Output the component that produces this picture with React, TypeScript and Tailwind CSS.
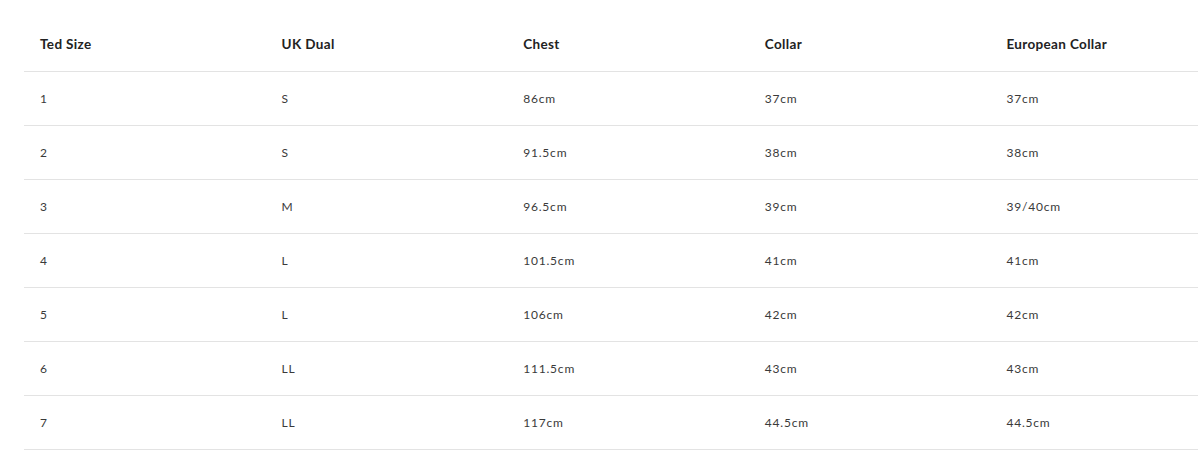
export default function App() {
  const header = ["Ted Size", "UK Dual", "Chest", "Collar", "European Collar"];
  const rows = [
    ["1", "S", "86cm", "37cm", "37cm"],
    ["2", "S", "91.5cm", "38cm", "38cm"],
    ["3", "M", "96.5cm", "39cm", "39/40cm"],
    ["4", "L", "101.5cm", "41cm", "41cm"],
    ["5", "L", "106cm", "42cm", "42cm"],
    ["6", "LL", "111.5cm", "43cm", "43cm"],
    ["7", "LL", "117cm", "44.5cm", "44.5cm"],
  ];
  return (
    <div className="w-[1198px] h-[458px] overflow-hidden bg-white pl-6 pt-[18px]" style={{ fontFamily: "Lato, 'Open Sans', sans-serif" }}>
      <div className="w-[1208px]">
        <div className="grid grid-cols-5 h-[54px] items-center border-b border-[#e3e3e3]">
          {header.map((h) => (
            <div key={h} className="pl-4 text-[13.5px] font-bold text-[#222] tracking-[0.35px]">{h}</div>
          ))}
        </div>
        {rows.map((r, i) => (
          <div key={i} className="grid grid-cols-5 h-[54px] items-center border-b border-[#e3e3e3]">
            {r.map((c, j) => (
              <div key={j} className="pl-4 text-[12px] text-[#3a3a3a] tracking-[0.8px]">{c}</div>
            ))}
          </div>
        ))}
      </div>
    </div>
  );
}
